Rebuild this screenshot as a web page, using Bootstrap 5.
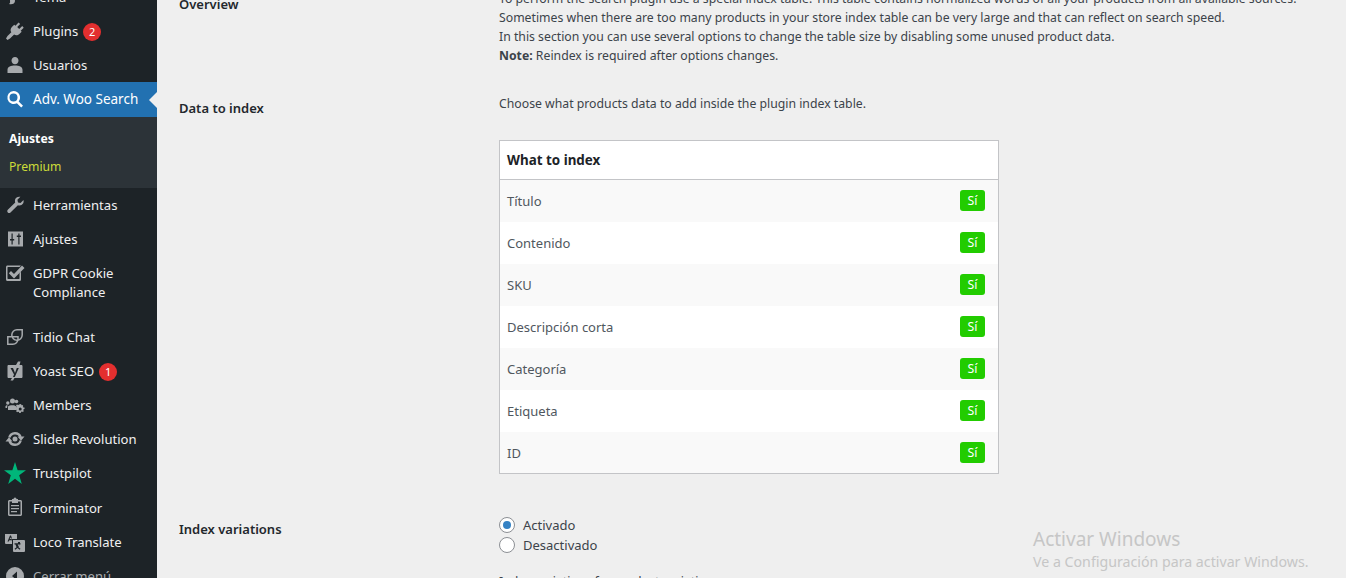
<!DOCTYPE html>
<html lang="es"><head><meta charset="utf-8"><title>Adv. Woo Search</title>
<link href="https://cdn.jsdelivr.net/npm/bootstrap@5.3.0/dist/css/bootstrap.min.css" rel="stylesheet">
<style>
html,body{height:578px;overflow:hidden}
body{background:#efefef;font-family:"Noto Sans","Open Sans",sans-serif;font-size:12.25px;color:#3c434a;line-height:19px}
.shell{height:578px;overflow:hidden}
.side{width:157px;flex:none;background:#1d2327;color:#f0f0f1;margin-top:-20px;height:620px;font-size:13.1px}
.mi{height:34px;padding-left:33px;padding-top:1px;position:relative;white-space:nowrap}
.mi svg{position:absolute;left:5px;top:7px;width:20px;height:20px;fill:#a7aaad}
.mi.act{background:#2271b1;color:#fff;height:35px;padding-top:0;font-size:13.5px}
.mi.act svg{fill:#fff}
.mi.act::after{content:"";position:absolute;right:0;top:10px;border:8px solid transparent;border-right-color:#efefef;border-left:0}
.mi.two{height:64px;align-items:flex-start;padding-top:8px;line-height:19px}
.cnt{background:#e32f2f;color:#fff;width:18px;height:18px;border-radius:50%;font-size:11px;line-height:18px;text-align:center;margin-left:5px}
.subm{background:#2c3338;height:71px;padding:12px 9px 0;font-size:12.2px}
.subm div{height:28px}
.subm .on{font-weight:700;color:#fff}.subm .pr{color:#cddc39}
.muted{color:#a7aaad}
.lbl{width:342px;flex:none;padding-left:22px;font-weight:600;color:#23282d;font-size:13px}
.main{flex:1;margin-top:-11px}
.sec{display:flex}
.tb{width:500px;border:1px solid #c3c4c7;margin:0;--bs-table-bg:transparent}
.tb th{height:39px;padding:0 7px;background:#fff;font-weight:700;color:#1d2327;border-bottom:1px solid #c3c4c7;vertical-align:middle;font-size:13.4px}
.tb td{height:42px;padding:0 7px;border:0;vertical-align:middle;color:#50575e;background:#fff;font-size:13px}
.tb td:first-child{padding-top:2px}
.tb tr:nth-child(odd) td{background:#f9f9f9}
.si{display:inline-block;width:25px;height:21px;line-height:21px;background:#22cc00;color:#fff;border-radius:3px;text-align:center;margin-right:6px;font-size:12.3px}
.rd{width:16px;height:16px;border:1px solid #8c8f94;border-radius:50%;background:#fff;flex:none;margin-right:8px;position:relative}
.rd.ck::after{content:"";position:absolute;inset:3px;background:#3582c4;border-radius:50%}
.rw{display:flex;align-items:center;height:20px;font-size:13px}
.wm{position:absolute;left:1033px;top:527px;color:#c6c6c6}
.wm b{display:block;font-weight:400;font-size:19px;line-height:24px}
.wm span{font-size:14.2px;line-height:22px;display:block}
</style></head><body>
<div class="shell d-flex">
<nav class="side">
<div class="mi d-flex align-items-center"><svg viewBox="0 0 20 20"><path d="M14 2c1.500 0 2.500 1 2.500 2.300 0 1.500-3 4.500-5.500 7-1-.8-2-1.500-3-1.800C10 6.500 12.500 2 14 2zM7 11c2 0 3 1.500 3 3 0 2.500-3 4-6 3 1.500-1 1-2 1-3.500C5 12 6 11 7 11z"/></svg>Tema</div>
<div class="mi d-flex align-items-center"><svg viewBox="0 0 20 20"><path d="M13.500 1.500l1.700 1.500-3 3 2 2 3-3 1.500 1.700-3 3 1 1-2.300 2.300c-1.500 1.500-3.800 1.700-5.300.6L5 17.500 2.500 19 1 17.500l1.500-2.500 3.800-3.700c-1.100-1.500-.9-3.800.6-5.300L9.200 3.700l1.300 1.100z"/></svg>Plugins<span class="cnt">2</span></div>
<div class="mi d-flex align-items-center"><svg viewBox="0 0 20 20"><path d="M10 9.300c2 0 3.500-1.600 3.500-3.700S12 2 10 2 6.500 3.500 6.500 5.600 8 9.300 10 9.300zM10 10.500c-4 0-7.500 1.300-7.500 4.200V18h15v-3.300c0-2.900-3.500-4.200-7.500-4.200z"/></svg>Usuarios</div>
<div class="mi act d-flex align-items-center"><svg viewBox="0 0 20 20"><path d="M8.500 2a6.500 6.500 0 0 1 5.200 10.400l4.300 4.300-1.800 1.800-4.300-4.300A6.500 6.500 0 1 1 8.500 2zm0 2.500a4 4 0 1 0 0 8 4 4 0 0 0 0-8z"/></svg>Adv. Woo Search</div>
<div class="subm"><div class="on">Ajustes</div><div class="pr">Premium</div></div>
<div class="mi d-flex align-items-center"><svg viewBox="0 0 20 20"><path d="M18.500 5c.5 2-.2 4-2 5-1.200.6-2.500.6-3.600.2L5.500 17.500c-.8.8-2 .8-2.700 0s-.8-1.900 0-2.700l7.400-7.400c-.4-1.100-.4-2.400.2-3.600 1-1.800 3-2.500 5-2l-3 3 .6 2.600 2.500.6z"/></svg>Herramientas</div>
<div class="mi d-flex align-items-center"><svg viewBox="0 0 20 20"><path fill-rule="evenodd" d="M3 2.500h15v15H3zM6.500 4.500v5.500H5v1.500h1.500v4h1.200v-4h1.500V10H7.700V4.500zm6.800 0v2h-1.500V8h1.500v7.500h1.200V8H16V6.500h-1.500v-2z"/></svg>Ajustes</div>
<div class="mi two d-flex"><svg viewBox="0 0 20 20"><path fill-rule="evenodd" d="M2.500 2.500H16l-1.500 1.500H3c-.3 0-.5.2-.5.5v11c0 .3.200.5.500.5h11c.3 0 .5-.2.500-.5v-5L16 8.500v8c0 1-.8 1.500-1.500 1.500h-12C1.500 18 1 17.300 1 16.500V4c0-.8.700-1.500 1.500-1.500zM6 8l3 3L17 2.500 19.500 5 9 15.500 3.800 10.300z"/></svg><span>GDPR Cookie<br>Compliance</span></div>
<div class="mi d-flex align-items-center"><svg viewBox="0 0 20 20"><path fill="none" stroke="#a7aaad" stroke-width="1.500" d="M12 2.800h5.200V8a5.200 5.200 0 0 1-10.400 0A5.200 5.200 0 0 1 12 2.800zM2.800 9.800H8a5.200 5.200 0 0 1 0 0h5V12a5.200 5.200 0 0 1-5.200 5.200H2.800z" style="fill:none"/></svg>Tidio Chat</div>
<div class="mi d-flex align-items-center"><svg viewBox="0 0 20 20"><path fill-rule="evenodd" d="M3.500 4H11L13 .5h2.500L14.500 4h2c.500 0 1 .5 1 1v11c0 .5-.5 1-1 1H9.500L8 19.500H5.500L7 17H3.500c-.5 0-1-.5-1-1V5c0-.500.500-1 1-1zM5.500 7l3.500 6.500L8 16h1.800l4-9h-2L10 12 8 7z"/></svg>Yoast SEO<span class="cnt">1</span></div>
<div class="mi d-flex align-items-center"><svg viewBox="0 0 20 20" style="left:4px;width:22px"><circle cx="7.500" cy="6" r="2.500"/><circle cx="2.800" cy="8" r="1.700"/><path d="M3 11.500c1-1.500 7-2 8-.2.500.9.500 1.700.5 3.700H3V11.500z"/><path d="M.5 13V11.500c0-1 1-1.300 2-1.300L2 13z"/><circle cx="11.500" cy="6.500" r="1.800"/><path fill-rule="evenodd" d="M15 9l1.200.3.300 1 1-.3.800.9-.5 1 .7.700 1-.1v1.600l-1 .2-.2 1 .6.800-1 1-1-.5-.9.500-.3 1h-1.500l-.2-1-1-.4-.8.600-1.100-1.100.5-.9-.4-.9-1-.2v-1.500l1-.2.300-1-.5-.9 1-1 1 .5.900-.4zm.2 3.500a1.500 1.500 0 1 0 0 3 1.500 1.500 0 0 0 0-3z"/></svg>Members</div>
<div class="mi d-flex align-items-center"><svg viewBox="0 0 20 20"><path fill="none" stroke="#a7aaad" stroke-width="2.400" d="M4.300 8.500A6 6 0 0 1 15.600 8M15.700 11.500A6 6 0 0 1 4.400 12" style="fill:none"/><path d="M12.500 7.500h7l-3.500 4.200zM.5 12.500h7L4 8.300z"/><circle cx="10" cy="10" r="2.500"/></svg>Slider Revolution</div>
<div class="mi d-flex align-items-center"><svg viewBox="0 0 20 20" style="left:4px;top:6px;width:22px;height:22px;fill:#00b67a"><path d="M10 0l2.400 7.500H20l-6.200 4.500 2.400 8L10 15.200 3.800 20l2.400-8L0 7.500h7.600z"/></svg>Trustpilot</div>
<div class="mi d-flex align-items-center" style="height:35px"><svg viewBox="0 0 20 20"><path fill-rule="evenodd" d="M7 3h1.500a1.500 1.500 0 0 1 3 0H13v1h2.500c.8 0 1.500.7 1.500 1.500v13c0 .8-.7 1.500-1.500 1.500h-11C3.700 20 3 19.300 3 18.500v-13C3 4.700 3.700 4 4.500 4H7zM4.500 5.500v13h11v-13H13V7H7V5.500zM6 9h8v1.300H6zm0 3h8v1.300H6zm0 3h6v1.300H6z" transform="translate(0 -1)"/></svg>Forminator</div>
<div class="mi d-flex align-items-center"><svg viewBox="0 0 20 20"><path fill-rule="evenodd" d="M0 2h12v5H7v5H1a1 1 0 0 1-1-1zM5 3.500L2.500 9.500h1.300l.5-1.300h2.200l.3.700V7H4.800l.7-1.800.5 1.300h1L6 3.500z"/><path fill-rule="evenodd" d="M8 8h11a1 1 0 0 1 1 1v10a1 1 0 0 1-1 1H9a1 1 0 0 1-1-1zm5 2v1.300h-3.500v1.200h1l1 2.700-2 1.600.8.900 2.200-1.700 2.200 1.700.8-.9-2-1.600 1-2.700h1v-1.200H15V10zm-.3 2.500h1.600l-.8 2z"/></svg>Loco Translate</div>
<div class="mi d-flex align-items-center muted"><svg viewBox="0 0 20 20"><path d="M10 1a9 9 0 1 1 0 18 9 9 0 0 1 0-18zm2 4.500L7 10l5 4.500z"/></svg>Cerrar menú</div>
</nav>
<main class="main">
<section class="sec" style="height:95px"><div class="lbl" style="padding-top:6px">Overview</div>
<div>To perform the search plugin use a special index table. This table contains normalized words of all your products from all available sources.<br>Sometimes when there are too many products in your store index table can be very large and that can reflect on search speed.<br>In this section you can use several options to change the table size by disabling some unused product data.<br><strong>Note:</strong> Reindex is required after options changes.</div></section>
<section class="sec" style="height:431px;padding-top:10px"><div class="lbl" style="padding-top:5px">Data to index</div>
<div><div style="margin-bottom:27px">Choose what products data to add inside the plugin index table.</div>
<table class="table tb"><thead><tr><th colspan="2">What to index</th></tr></thead><tbody>
<tr><td>Título</td><td class="text-end"><span class="si">Sí</span></td></tr>
<tr><td>Contenido</td><td class="text-end"><span class="si">Sí</span></td></tr>
<tr><td>SKU</td><td class="text-end"><span class="si">Sí</span></td></tr>
<tr><td>Descripción corta</td><td class="text-end"><span class="si">Sí</span></td></tr>
<tr><td>Categoría</td><td class="text-end"><span class="si">Sí</span></td></tr>
<tr><td>Etiqueta</td><td class="text-end"><span class="si">Sí</span></td></tr>
<tr><td>ID</td><td class="text-end"><span class="si">Sí</span></td></tr>
</tbody></table></div></section>
<section class="sec"><div class="lbl" style="padding-top:5px">Index variations</div>
<div><div class="rw"><span class="rd ck"></span>Activado</div><div class="rw"><span class="rd"></span>Desactivado</div>
<div style="margin-top:17px">Index variations for product variations.</div></div></section>
</main></div>
<div class="wm"><b>Activar Windows</b><span>Ve a Configuración para activar Windows.</span></div>
</body></html>
